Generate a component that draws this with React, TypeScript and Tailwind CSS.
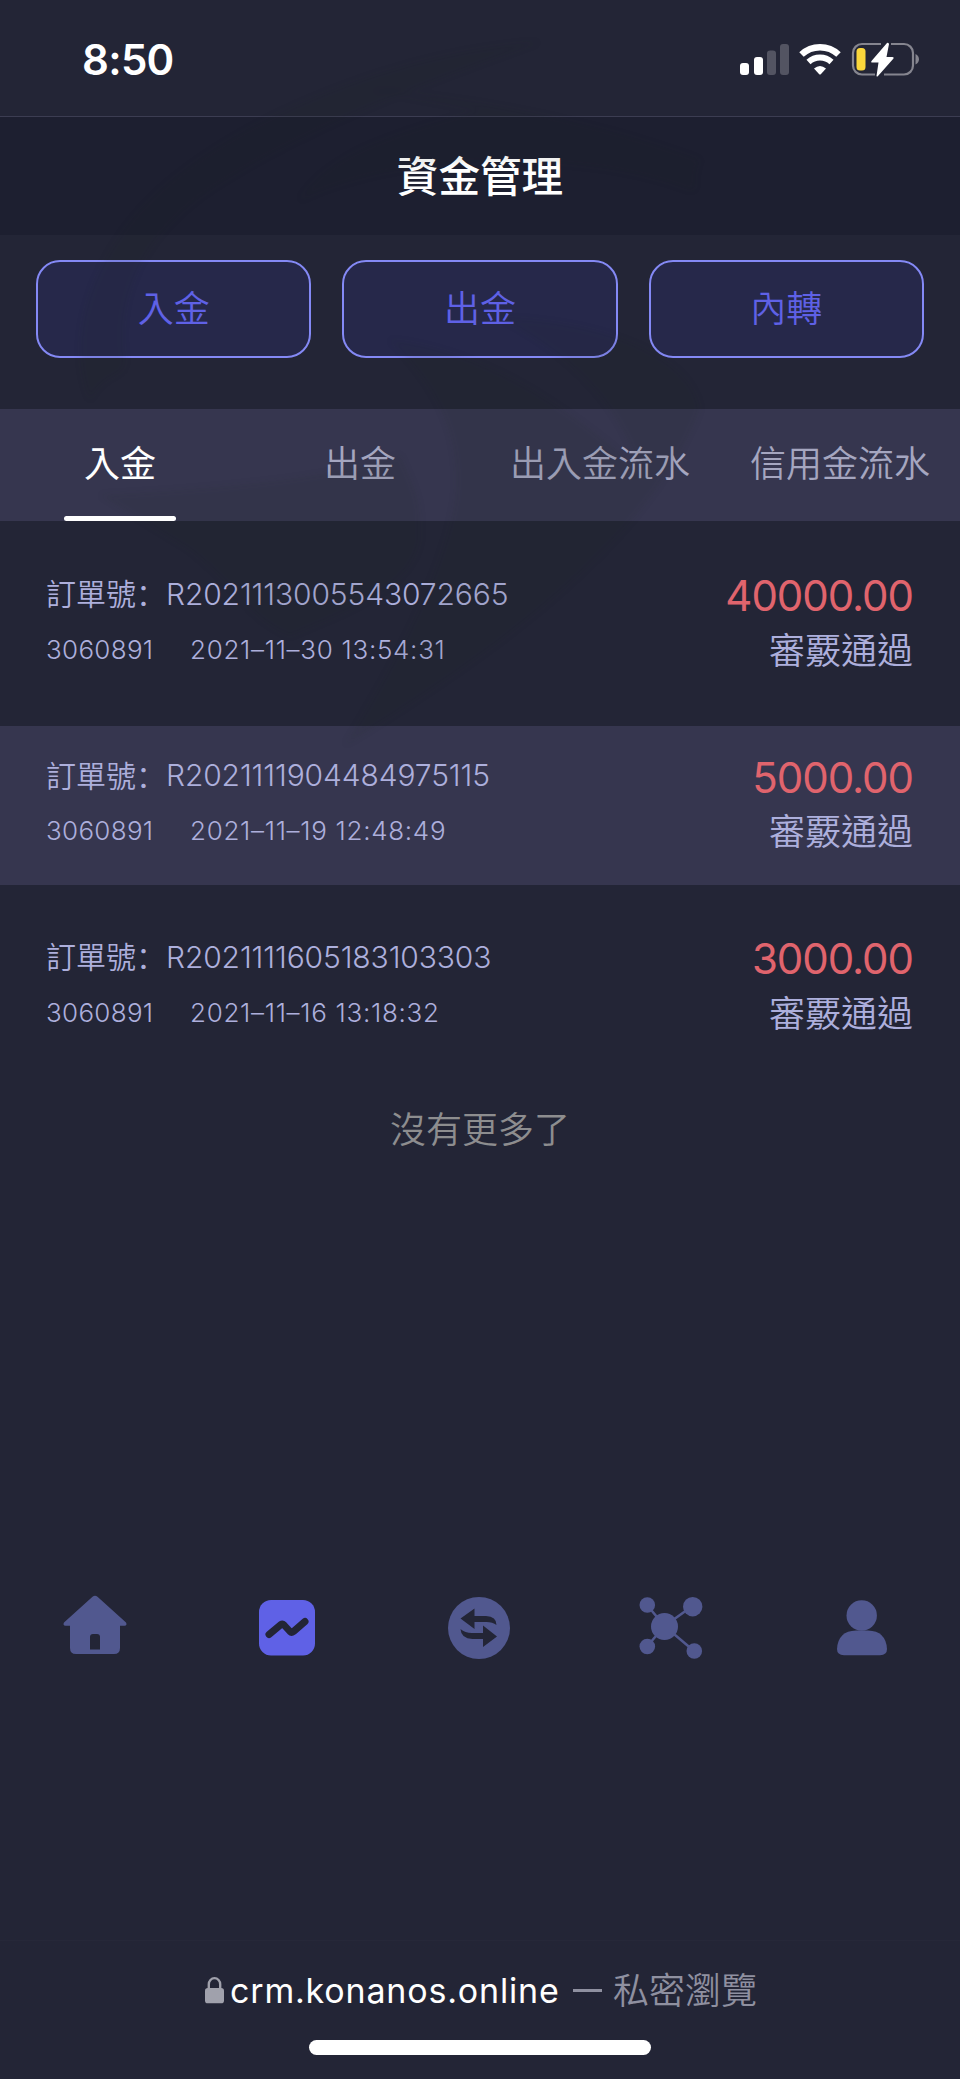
import React from "react";

const records = [
  { order: "R2021113005543072665", account: "3060891", time: "2021–11–30 13:54:31", amount: "40000.00", active: false },
  { order: "R2021111904484975115", account: "3060891", time: "2021–11–19 12:48:49", amount: "5000.00", active: true },
  { order: "R2021111605183103303", account: "3060891", time: "2021–11–16 13:18:32", amount: "3000.00", active: false },
];

const actions = ["入金", "出金", "內轉"];
const tabs = ["入金", "出金", "出入金流水", "信用金流水"];

function StatusIcons() {
  return (
    <svg className="h-[36px] w-[184px]" viewBox="738 41 184 36">
      <g fill="#fff">
        <rect x="740" y="63" width="9" height="12" rx="3" />
        <rect x="754" y="57" width="9" height="18" rx="3" />
        <rect x="767" y="50.500" width="9" height="24.500" rx="3" fillOpacity="0.22" />
        <rect x="780" y="44" width="9" height="31" rx="3" fillOpacity="0.22" />
      </g>
      <g fill="none" stroke="#fff">
        <path d="M801.500 54.500 a27 27 0 0 1 37 0" strokeWidth="6.500" />
        <path d="M808.500 62 a17 17 0 0 1 23 0" strokeWidth="6" />
      </g>
      <path d="M814 68.500 q6 -5 12 0 l-5 5.500 q-1 1 -2 0 z" fill="#fff" />
      <path d="M881 44 H862 a9 9 0 0 0 -9 9 v12.500 a9 9 0 0 0 9 9 H875 M891 44 h13 a9 9 0 0 1 9 9 v12.500 a9 9 0 0 1 -9 9 H884" fill="none" stroke="#85858f" strokeWidth="2.200" />
      <path d="M915.500 54 q3.500 2 3.500 5.300 t-3.500 5.300 z" fill="#85858f" />
      <rect x="856.500" y="48" width="9" height="22.500" rx="3.500" fill="#fbd73b" />
      <path d="M887 43 L871.500 61 q-1 1.500 1 1.500 h6 L876.500 76 q.5 1 1.500 0 L893.500 58.500 q.8 -1.500 -1 -1.500 h-6 L889 44 q-.8 -2 -2 -1z" fill="#fff" />
    </svg>
  );
}

function Watermark() {
  return (
    <svg className="pointer-events-none absolute top-0 left-0 h-[860px] w-[760px] blur-[3px]" viewBox="0 0 760 860">
      <g fill="#14201c" fillOpacity="0.08">
        <path d="M540 42 C400 50 230 120 150 200 C90 260 65 340 90 400 C105 370 125 380 125 360 C115 290 150 230 210 190 C300 130 420 85 540 42 Z" />
        <path d="M370 90 C500 100 620 130 700 160 C690 180 700 190 690 190 C590 150 400 150 300 200 C330 150 410 130 480 110 Z" />
        <path d="M390 340 C440 390 462 440 455 500 C445 560 410 640 345 745 C500 650 650 540 700 409 C690 350 590 320 500 318 C580 360 620 410 640 470 C560 400 480 350 390 340 Z" />
        <path d="M100 495 C200 490 330 480 400 455 C420 500 420 500 420 540 C410 590 350 610 290 636 C250 620 240 590 190 550 Z" />
      </g>
    </svg>
  );
}

function HomeIcon() {
  return (
    <svg className="h-[72px] w-[72px]" viewBox="60 1591 72 72">
      <path d="M92.500 1595.800 q2.500 -2 5 0 L126 1621.500 q1.500 3 -1.500 3.200 H120 V1647 q0 6 -6 6 H76 q-6 0 -6 -6 V1624.700 H65.500 q-3 -.2 -1.500 -3.200 Z" fill="#51588f" />
      <path d="M90 1648.500 V1636 q0 -3 3 -3 h4 q3 0 3 3 v12.500 z" fill="#232536" />
    </svg>
  );
}

function ChartIcon() {
  return (
    <svg className="h-[72px] w-[72px]" viewBox="251 1592 72 72">
      <rect x="259" y="1600" width="56" height="55.500" rx="12" fill="#5f61e6" />
      <path d="M269 1634.500 L281 1624.500 q1.500 -1 3 .5 L290 1631.500 q1.500 1.500 3.500 0 L305 1621.500" fill="none" stroke="#232536" strokeWidth="7" strokeLinecap="round" strokeLinejoin="round" />
    </svg>
  );
}

function TransferIcon() {
  return (
    <svg className="h-[72px] w-[72px]" viewBox="443 1592 72 72">
      <circle cx="479" cy="1628" r="31" fill="#51588f" />
      <path d="M460.500 1618.500 L474.500 1608.500 V1616 H486 q10.500 .5 10.500 9 q-4 -3 -10 -3 H474.500 V1629 Z" fill="#232536" />
      <path d="M497 1636.500 L483 1625.500 V1633 H472 q-7 0 -11.500 -4 q.5 9.500 12 10 H483 V1647 Z" fill="#232536" />
    </svg>
  );
}

function NetworkIcon() {
  return (
    <svg className="h-[72px] w-[72px]" viewBox="635 1592 72 72">
      <path d="M647 1605 L664.500 1626 L692.500 1606 M647 1646.500 L664.500 1626 L694 1651" fill="none" stroke="#51588f" strokeWidth="2.500" />
      <g fill="#51588f">
        <circle cx="664.500" cy="1626.500" r="13.500" />
        <circle cx="647.300" cy="1605" r="7.800" />
        <circle cx="692.700" cy="1606.700" r="9.700" />
        <circle cx="647.300" cy="1646.500" r="7.800" />
        <circle cx="694.300" cy="1651" r="7.800" />
      </g>
    </svg>
  );
}

function UserIcon() {
  return (
    <svg className="h-[72px] w-[72px]" viewBox="827 1592 72 72">
      <g fill="#51588f">
        <circle cx="862.700" cy="1615.500" r="15.200" />
        <path d="M838 1649 q1 -18 19 -18.500 h12 q18 .5 19 18.500 q0 6 -7 6.200 h-36 q-7 -.2 -7 -6.200z" />
      </g>
    </svg>
  );
}

export default function App() {
  return (
    <div lang="zh-TW" className="relative flex h-[2079px] w-[960px] flex-col overflow-hidden bg-[#232536] font-['Inter','Noto_Sans_CJK_TC',sans-serif]">
      <header className="flex h-[116px] shrink-0 items-start justify-between pr-[38px] pl-[82px] text-white">
        <span className="mt-[35px] text-[42px] leading-[50px] font-semibold tracking-[-0.7px]">8:50</span>
        <span className="mt-[41px]"><StatusIcons /></span>
      </header>
      <h1 className="flex h-[119px] shrink-0 items-center justify-center border-t border-[#3c3d52] bg-[#1d1f30] pt-[2px] text-[41.600px] font-medium text-white">資金管理</h1>

      <div className="mt-[25px] grid h-[98px] shrink-0 grid-cols-3 gap-[31px] px-9">
        {actions.map((a) => (
          <button key={a} className="rounded-[24px] border-2 border-[#8489f5] bg-[#26284a] text-[36px] font-[350] text-[#5f61e6]">{a}</button>
        ))}
      </div>

      <nav className="mt-[51px] grid h-[112px] shrink-0 grid-cols-4 bg-[#36364f]">
        {tabs.map((t, i) => (
          <button key={t} className={i === 0 ? "relative z-10 flex flex-col items-center text-[36px] text-white" : "flex flex-col items-center text-[36px] font-[350] text-[#a5a6c0]"}>
            <span className="flex h-[107px] items-center pt-[3px] whitespace-nowrap">{t}</span>
            {i === 0 && <span className="h-[5px] w-[112px] rounded-sm bg-white" />}
          </button>
        ))}
      </nav>

      <main className="flex flex-col gap-[23px] pt-[23.500px]">
        {records.map((r) => (
          <section key={r.order} className={r.active ? "flex h-[158.500px] justify-between bg-[#36364f] pr-[47px] pl-[46px]" : "flex h-[158.500px] justify-between pr-[47px] pl-[46px]"}>
            <div className="pt-[27.500px] text-[#adafdc]">
              <div className="flex h-[44px] items-center text-[30px]">
                <span lang="zh-CN" className="w-[120px] pb-[3px] font-['Noto_Sans_CJK_SC',sans-serif] font-[350] whitespace-nowrap">訂單號：</span>
                <span className="font-light tracking-[-0.120px]">{r.order}</span>
              </div>
              <div className="mt-[11px] flex h-[44px] items-center text-[26px] font-light">
                <span className="w-[144px] tracking-[0.300px]">{r.account}</span>
                <span className="tracking-[0.700px]">{r.time}</span>
              </div>
            </div>
            <div className="flex flex-col items-end pt-[26.500px]">
              <span className="text-[42px] leading-[50px] tracking-[-1.050px] text-[#e0646d]">{r.amount}</span>
              <span className="mt-[4.500px] text-[36px] leading-[50px] font-[350] text-[#adafdc]">審覈通過</span>
            </div>
          </section>
        ))}
        <p className="mt-[16px] text-center text-[36px] leading-[50px] font-[350] text-[#8d8d8f]">沒有更多了</p>
      </main>

      <footer className="mt-auto shrink-0">
        <div className="flex justify-around pr-[2px] pb-[276px]">
          <HomeIcon /><ChartIcon /><TransferIcon /><NetworkIcon /><UserIcon />
        </div>
        <div className="flex h-[139px] flex-col items-center border-t border-[#262839]">
          <div className="mt-[23px] flex h-[52px] w-[554px] items-center pl-[2px] text-[34px] whitespace-nowrap text-white">
            <svg className="h-[28px] w-[19px]" viewBox="0 0 20 28">
              <rect y="12" width="20" height="16" rx="3" fill="#a0a1ac" />
              <path d="M4 13 V8 a6 6.500 0 0 1 12 0 v5" fill="none" stroke="#a0a1ac" strokeWidth="2.500" />
            </svg>
            <span className="ml-[6px] tracking-[0.820px]">crm.konanos.online</span>
            <span className="ml-auto h-[3px] w-[29px] bg-[#8f90a0]" />
            <span className="ml-[11px] pt-px text-[36px] font-[350] text-[#8f90a0]">私密瀏覽</span>
          </div>
          <div className="mt-[24px] h-[15px] w-[342px] rounded-full bg-white" />
        </div>
      </footer>
      <Watermark />
    </div>
  );
}
